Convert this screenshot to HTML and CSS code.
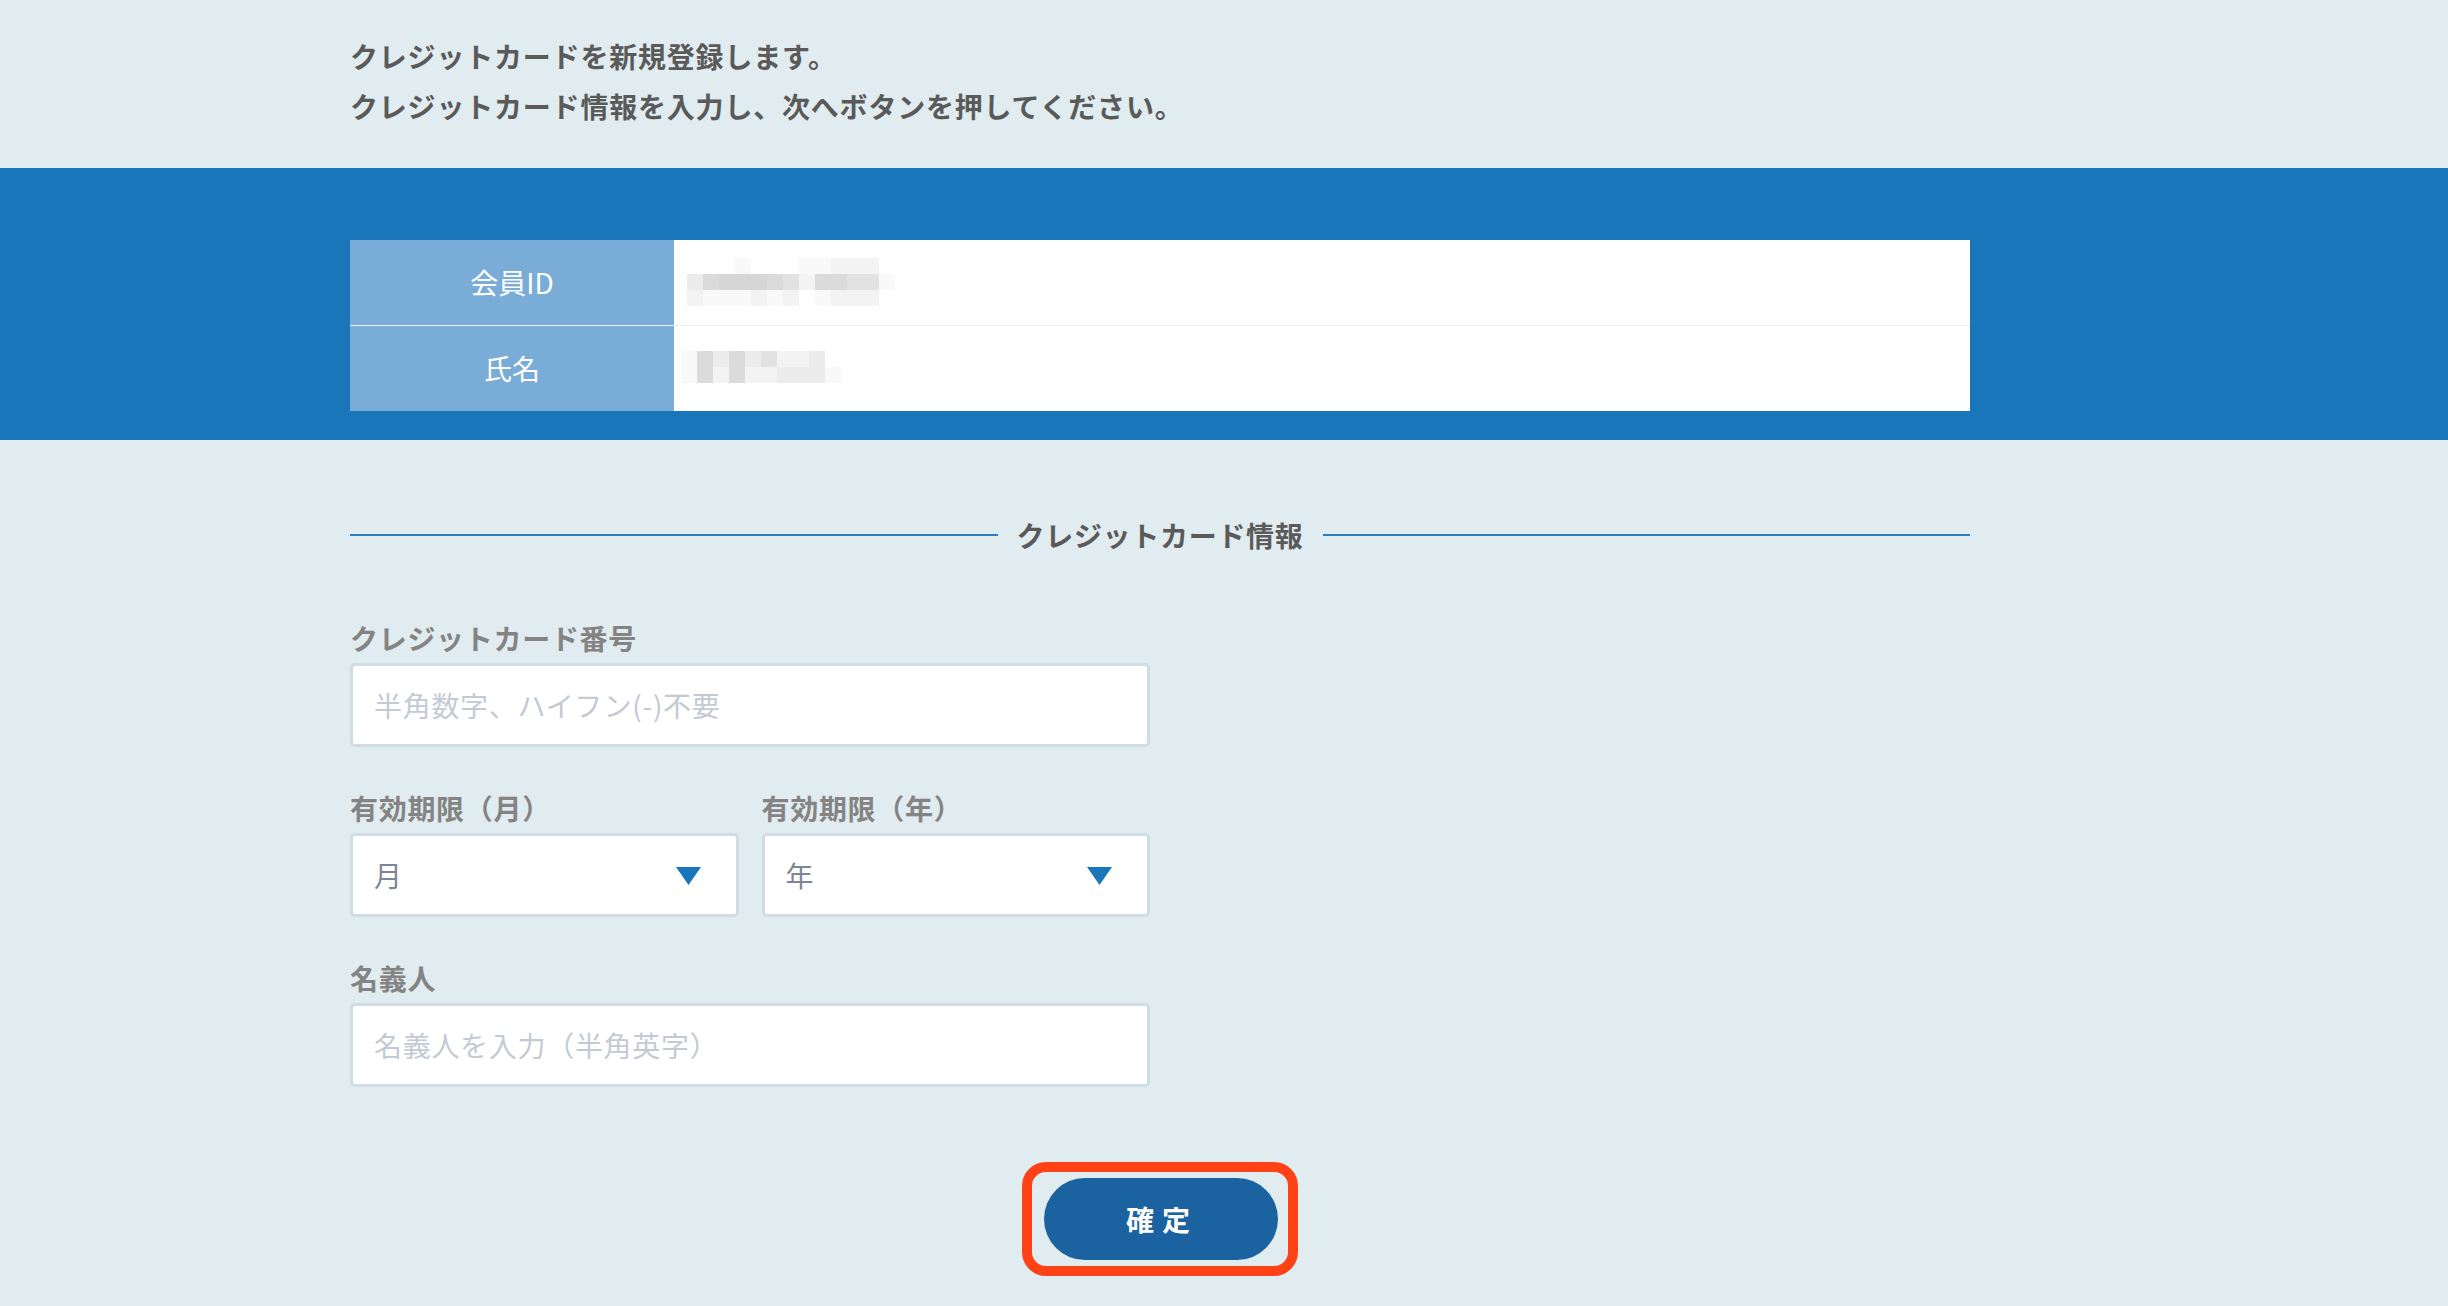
FILE: index.html
```html
<!DOCTYPE html>
<html lang="ja">
<head>
<meta charset="utf-8">
<title>クレジットカード登録</title>
<link rel="stylesheet" href="styles.css">
</head>
<body>
<header class="intro">
  <div class="wrap">
    <p>クレジットカードを新規登録します。</p>
    <p>クレジットカード情報を入力し、次へボタンを押してください。</p>
  </div>
</header>

<section class="band">
  <div class="wrap info">
    <div class="info-label">会員ID</div>
    <div class="info-value">
      <div class="mosaic m1">
        <i class="g0"></i><i class="g0"></i><i class="g0"></i><i class="g1"></i><i class="g0"></i><i class="g0"></i><i class="g0"></i><i class="g1"></i><i class="g1"></i><i class="g2"></i><i class="g2"></i><i class="g2"></i><i class="g0"></i>
        <i class="g3"></i><i class="g5"></i><i class="g6"></i><i class="g6"></i><i class="g6"></i><i class="g5"></i><i class="g4"></i><i class="g2"></i><i class="g5"></i><i class="g5"></i><i class="g4"></i><i class="g4"></i><i class="g1"></i>
        <i class="g2"></i><i class="g1"></i><i class="g1"></i><i class="g1"></i><i class="g2"></i><i class="g1"></i><i class="g2"></i><i class="g0"></i><i class="g1"></i><i class="g2"></i><i class="g2"></i><i class="g2"></i><i class="g0"></i>
      </div>
    </div>
    <div class="info-label">氏名</div>
    <div class="info-value">
      <div class="mosaic m2">
        <i class="g1"></i><i class="g5"></i><i class="g3"></i><i class="g5"></i><i class="g3"></i><i class="g4"></i><i class="g2"></i><i class="g2"></i><i class="g3"></i><i class="g0"></i>
        <i class="g1"></i><i class="g5"></i><i class="g2"></i><i class="g5"></i><i class="g2"></i><i class="g2"></i><i class="g3"></i><i class="g3"></i><i class="g3"></i><i class="g1"></i>
      </div>
    </div>
  </div>
</section>

<main class="wrap form">
  <h2 class="section-title"><span>クレジットカード情報</span></h2>

  <div class="field wide">
    <label class="field-label" for="card">クレジットカード番号</label>
    <input class="text-input" id="card" type="text" placeholder="半角数字、ハイフン(-)不要">
  </div>

  <div class="field-row">
    <div class="field">
      <div class="field-label">有効期限（月）</div>
      <div class="select">
        <span>月</span>
        <svg class="caret" width="25" height="18" viewBox="0 0 25 18"><polygon points="0,0 25,0 12.5,18" fill="#1976bb"/></svg>
      </div>
    </div>
    <div class="field">
      <div class="field-label">有効期限（年）</div>
      <div class="select">
        <span>年</span>
        <svg class="caret" width="25" height="18" viewBox="0 0 25 18"><polygon points="0,0 25,0 12.5,18" fill="#1976bb"/></svg>
      </div>
    </div>
  </div>

  <div class="field wide">
    <label class="field-label" for="holder">名義人</label>
    <input class="text-input" id="holder" type="text" placeholder="名義人を入力（半角英字）">
  </div>

  <div class="actions">
    <div class="ring">
      <button class="submit" type="button">確定</button>
    </div>
  </div>
</main>
</body>
</html>
```

FILE: styles.css
```css
* { box-sizing: border-box; }

html, body {
  margin: 0;
  padding: 0;
  background: #e0ecef;
  font-family: "Noto Sans CJK JP", "Noto Sans", sans-serif;
  letter-spacing: 0.7px;
  height: 100%;
  overflow: hidden;
}

.wrap {
  width: 1620px;
  margin-left: 350px;
}

.intro {
  padding: 31px 0 37px;
}

.intro p {
  margin: 0;
  font-size: 28px;
  line-height: 50px;
  font-weight: 700;
  color: #5a5a5a;
  letter-spacing: 0.8px;
}

.band {
  background: #1976bb;
  padding: 72px 0 29px;
}

.info {
  display: grid;
  grid-template-columns: 324px 1fr;
  grid-template-rows: 85px 85px;
  row-gap: 1px;
  background: #e8f0f8;
}

.info-label {
  background: #79acd6;
  color: #ffffff;
  font-size: 28px;
  letter-spacing: 0;
  display: flex;
  align-items: center;
  justify-content: center;
  padding-bottom: 2px;
}

.info-value {
  background: #ffffff;
  display: flex;
  align-items: center;
}

.mosaic {
  display: grid;
  grid-auto-rows: 16px;
}

.mosaic i {
  display: block;
  width: 16px;
  height: 16px;
}

.m1 {
  grid-template-columns: repeat(13, 16px);
  margin-left: 13px;
  margin-top: -2px;
}

.m2 {
  grid-template-columns: repeat(10, 16px);
  margin-left: 7px;
  margin-top: -4px;
}

.g0 { background: #ffffff; }
.g1 { background: #f9f9f9; }
.g2 { background: #f3f3f3; }
.g3 { background: #ececec; }
.g4 { background: #e2e2e2; }
.g5 { background: #dbdbdb; }
.g6 { background: #d6d6d6; }

.form {
  padding-top: 70px;
}

.section-title {
  margin: 0 0 59px;
  display: flex;
  align-items: center;
  gap: 19px;
  font-size: 28px;
  line-height: 50px;
  font-weight: 700;
  color: #5a5a5a;
}

.section-title::before,
.section-title::after {
  content: "";
  flex: 1;
  height: 2px;
  background: #2a7fc0;
}

.field {
  display: flex;
  flex-direction: column;
}

.wide {
  width: 800px;
}

.field-label {
  font-size: 28px;
  line-height: 38px;
  font-weight: 700;
  color: #848484;
  margin-bottom: 6px;
}

.text-input,
.select {
  height: 84px;
  background: #ffffff;
  border: 3px solid #cfdee4;
  border-radius: 5px;
  font-family: inherit;
  font-size: 28px;
  letter-spacing: 0.7px;
  padding: 0 21px;
  outline: none;
}

.text-input::placeholder {
  color: #c3cad4;
}

.field-row {
  display: flex;
  gap: 23px;
  width: 800px;
  margin: 42px 0;
}

.field-row .field {
  flex: 1;
}

.select {
  display: flex;
  align-items: center;
  justify-content: space-between;
  color: #7d8692;
  padding-right: 35px;
}

.caret {
  display: block;
  margin-top: 2px;
}

.actions {
  display: flex;
  justify-content: center;
  margin-top: 75px;
}

.ring {
  border: 10px solid #ff4215;
  border-radius: 24px;
  padding: 6px 10px 6px 12px;
}

.submit {
  display: block;
  width: 234px;
  height: 82px;
  border: none;
  border-radius: 41px;
  background: #1b63a0;
  color: #ffffff;
  font-family: inherit;
  font-size: 28px;
  font-weight: 700;
  letter-spacing: 8px;
  padding-left: 8px;
  cursor: pointer;
}
```
